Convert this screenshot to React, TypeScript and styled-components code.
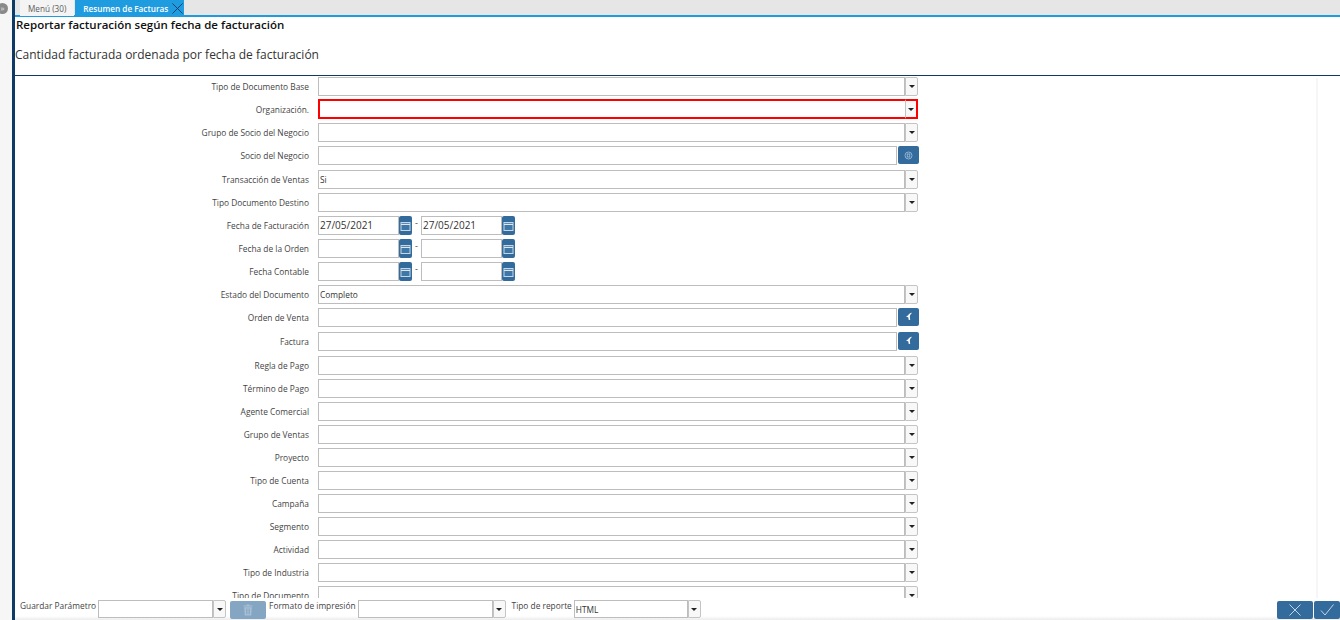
import { createGlobalStyle } from 'styled-components';
import styled from 'styled-components';

const GlobalStyle = createGlobalStyle`
  html, body {
    margin: 0;
    padding: 0;
    height: 100%;
    overflow: hidden;
    background: #ffffff;
    font-family: 'Open Sans', 'Noto Sans', sans-serif;
  }
`;

const Page = styled.div`
  display: flex;
  width: 1340px;
  height: 620px;
  overflow: hidden;
`;

const Sidebar = styled.div`
  position: relative;
  flex: 0 0 12px;
  background: #f6f6f6;
  border-right: 3px solid #0e3a66;
`;

const ExpandButton = styled.div`
  position: absolute;
  left: -3px;
  top: 3px;
  width: 11px;
  height: 11px;
  border-radius: 50%;
  background: #8a8a8a;
  color: #e4e4e4;
  font-size: 8px;
  line-height: 10px;
  text-align: center;
`;

const Main = styled.div`
  flex: 1;
  display: flex;
  flex-direction: column;
  min-width: 0;
`;

const TabBar = styled.div`
  flex: 0 0 15px;
  display: flex;
  align-items: stretch;
  padding-left: 5px;
  gap: 1px;
  background: #e6e6e6;
  border-bottom: 2px solid #1f9ce0;
  box-sizing: content-box;
  height: 15px;
`;

const Tab = styled.div<{ $active?: boolean }>`
  display: flex;
  align-items: center;
  height: 16px;
  padding: ${({ $active }) => ($active ? '0 1px 0 8px' : '0 8px')};
  gap: 4px;
  font-size: 8.2px;
  font-weight: ${({ $active }) => ($active ? 600 : 400)};
  color: ${({ $active }) => ($active ? '#ffffff' : '#5c5c5c')};
  background: ${({ $active }) => ($active ? '#1f9ce0' : '#f4f4f4')};
`;

const Header = styled.div`
  flex: 0 0 59px;
  box-sizing: border-box;
  border-bottom: 1px solid #0e3a66;
`;

const Title = styled.div`
  font-size: 11.5px;
  font-weight: 600;
  line-height: 16px;
  color: #111111;
  margin-left: 1px;
`;

const Subtitle = styled.div`
  font-size: 12px;
  line-height: 18px;
  color: #333333;
  margin-top: 13px;
`;

const FormArea = styled.div`
  position: relative;
  flex: 1;
  min-height: 0;
  overflow: hidden;
  padding-top: 1px;
`;

const ScrollEdge = styled.div`
  position: absolute;
  left: 1301px;
  top: 2px;
  bottom: 0;
  width: 2px;
  background: #f6f6f6;
`;

const Row = styled.div<{ $tall?: boolean }>`
  display: grid;
  grid-template-columns: 294px 1fr;
  column-gap: 9px;
  height: ${({ $tall }) => ($tall ? 24 : 23)}px;
`;

const Label = styled.div`
  font-size: 8.35px;
  line-height: 19px;
  text-align: right;
  color: #444444;
  white-space: nowrap;
`;

const Fields = styled.div`
  display: flex;
  align-items: flex-start;
`;

const Input = styled.div<{ $w: number; $error?: boolean; $big?: boolean; $small?: boolean }>`
  box-sizing: border-box;
  width: ${({ $w }) => $w}px;
  height: ${({ $error, $small }) => ($error ? 20 : $small ? 18 : 19)}px;
  margin-top: ${({ $error }) => ($error ? -1 : 0)}px;
  border: ${({ $error }) => ($error ? '2px solid #ff0000' : '1px solid #bdbdbd')};
  border-right-width: ${({ $error }) => ($error ? '0' : '1px')};
  background: #ffffff;
  padding: ${({ $small }) => ($small ? '1px 0 0 1px' : '0 0 0 1px')};
  font-size: ${({ $big }) => ($big ? 10 : 8.35)}px;
  line-height: ${({ $small }) => ($small ? 16 : 17)}px;
  color: #333333;
  white-space: nowrap;
`;

const ComboButton = styled.div<{ $error?: boolean; $small?: boolean }>`
  box-sizing: border-box;
  display: flex;
  align-items: center;
  justify-content: center;
  width: 13px;
  height: ${({ $error, $small }) => ($error ? 20 : $small ? 18 : 19)}px;
  margin-top: ${({ $error }) => ($error ? -1 : 0)}px;
  border: ${({ $error }) => ($error ? '2px solid #ff0000' : '1px solid #c4c4c4')};
  border-left: 1px solid #c4c4c4;
  border-radius: ${({ $error }) => ($error ? '0' : '0 2px 2px 0')};
  background: #f8f8f8;
`;

const Caret = styled.span`
  width: 0;
  height: 0;
  border-left: 3px solid transparent;
  border-right: 3px solid transparent;
  border-top: 3px solid #222222;
`;

const BlueButton = styled.div<{ $w: number; $h: number; $ml?: number }>`
  display: flex;
  align-items: center;
  justify-content: center;
  width: ${({ $w }) => $w}px;
  height: ${({ $h }) => $h}px;
  margin-left: ${({ $ml }) => $ml ?? 0}px;
  border-radius: 2px;
  background: #336b9c;
  flex: none;
`;

const DateDash = styled.span`
  width: 9px;
  text-align: center;
  font-size: 9px;
  line-height: 14px;
  color: #444444;
`;

const Footer = styled.div`
  flex: 0 0 22px;
  box-sizing: border-box;
  display: flex;
  align-items: flex-start;
  padding: 2px 0 0 5px;
  background: linear-gradient(#ffffff 0, #ffffff 18px, #ececec 22px);
`;

const FooterLabel = styled.span<{ $mr?: number; $ml?: number }>`
  font-size: 8.35px;
  line-height: 15px;
  margin-top: -2px;
  color: #444444;
  white-space: nowrap;
  margin-left: ${({ $ml }) => $ml ?? 0}px;
  margin-right: ${({ $mr }) => $mr ?? 0}px;
`;

const FooterActions = styled.div`
  margin-left: auto;
  display: flex;
  gap: 1px;
  margin-top: 1px;
`;

const TrashButton = styled(BlueButton)`
  background: #85a6c3;
  margin-top: 1px;
  margin-right: 3px;
`;

const Combo = ({
  width,
  value,
  error,
  small,
}: {
  width: number;
  value?: string;
  error?: boolean;
  small?: boolean;
}): JSX.Element => (
  <>
    <Input $w={width} $error={error} $small={small}>
      {value}
    </Input>
    <ComboButton $error={error} $small={small}>
      <Caret />
    </ComboButton>
  </>
);

const CalendarIcon = (): JSX.Element => (
  <svg width="11" height="12" viewBox="0 0 11 12" fill="none">
    <rect x="1" y="2.5" width="9" height="8" fill="#3f77a8" stroke="#c5d7e6" strokeWidth="1" />
    <path d="M1 4.5 H10" stroke="#dbe7f1" strokeWidth="1" />
    <path d="M2 3.5 H9" stroke="#5f8ab0" strokeWidth="1" />
  </svg>
);

const DateField = ({ value }: { value?: string }): JSX.Element => (
  <>
    <Input $w={81} $big>
      {value}
    </Input>
    <BlueButton $w={13} $h={19}>
      <CalendarIcon />
    </BlueButton>
  </>
);

const DateRange = ({ value }: { value?: string }): JSX.Element => (
  <>
    <DateField value={value} />
    <DateDash>-</DateDash>
    <DateField value={value} />
  </>
);

const BackIcon = (): JSX.Element => (
  <svg width="10" height="10" viewBox="0 0 10 10" fill="#ffffff">
    <path d="M8 0.8 C6 1 4.6 2.2 4.1 3.6 L2 4.2 L4.4 5.4 L4.6 7.8 L6.2 8 L5.8 4.6 C6 3.2 6.8 2 8 0.8 Z" />
  </svg>
);

const TargetIcon = (): JSX.Element => (
  <svg width="9" height="9" viewBox="0 0 9 9" fill="none" stroke="#8fb3d2" strokeWidth="1">
    <circle cx="4.5" cy="4.5" r="3.5" />
    <rect x="3.3" y="3" width="2.4" height="3" />
  </svg>
);

const TrashIcon = (): JSX.Element => (
  <svg width="10" height="12" viewBox="0 0 10 12" fill="#a7c0d6">
    <path d="M3.5 0.5 H6.5 V1.5 H9.5 V2.5 H0.5 V1.5 H3.5 Z" />
    <path d="M1.2 3.2 H8.8 L8.2 11.5 H1.8 Z M3 4.5 V10.2 H3.8 V4.5 Z M4.6 4.5 V10.2 H5.4 V4.5 Z M6.2 4.5 V10.2 H7 V4.5 Z" fillRule="evenodd" />
  </svg>
);

const CloseIcon = ({ size, color }: { size: number; color: string }): JSX.Element => (
  <svg width={size} height={size} viewBox="0 0 12 12" stroke={color} strokeWidth="1" fill="none">
    <path d="M0.5 0.5 L11.5 11.5 M11.5 0.5 L0.5 11.5" />
  </svg>
);

const CheckIcon = (): JSX.Element => (
  <svg width="14" height="12" viewBox="0 0 14 12" stroke="#c3d5e5" strokeWidth="1" fill="none">
    <path d="M1 6.5 L5 11 L13.5 0.5" />
  </svg>
);

type Kind = 'combo' | 'error' | 'search' | 'date' | 'lookup';

const rows: { label: string; kind: Kind; value?: string }[] = [
  { label: 'Tipo de Documento Base', kind: 'combo' },
  { label: 'Organización.', kind: 'error' },
  { label: 'Grupo de Socio del Negocio', kind: 'combo' },
  { label: 'Socio del Negocio', kind: 'search' },
  { label: 'Transacción de Ventas', kind: 'combo', value: 'Si' },
  { label: 'Tipo Documento Destino', kind: 'combo' },
  { label: 'Fecha de Facturación', kind: 'date', value: '27/05/2021' },
  { label: 'Fecha de la Orden', kind: 'date' },
  { label: 'Fecha Contable', kind: 'date' },
  { label: 'Estado del Documento', kind: 'combo', value: 'Completo' },
  { label: 'Orden de Venta', kind: 'lookup' },
  { label: 'Factura', kind: 'lookup' },
  { label: 'Regla de Pago', kind: 'combo' },
  { label: 'Término de Pago', kind: 'combo' },
  { label: 'Agente Comercial', kind: 'combo' },
  { label: 'Grupo de Ventas', kind: 'combo' },
  { label: 'Proyecto', kind: 'combo' },
  { label: 'Tipo de Cuenta', kind: 'combo' },
  { label: 'Campaña', kind: 'combo' },
  { label: 'Segmento', kind: 'combo' },
  { label: 'Actividad', kind: 'combo' },
  { label: 'Tipo de Industria', kind: 'combo' },
  { label: 'Tipo de Documento', kind: 'combo' },
];

const App = (): JSX.Element => (
  <>
    <GlobalStyle />
    <Page>
      <Sidebar>
        <ExpandButton>»</ExpandButton>
      </Sidebar>
      <Main>
        <TabBar>
          <Tab>Menú (30)</Tab>
          <Tab $active>
            Resumen de Facturas
            <CloseIcon size={11} color="#0e3a66" />
          </Tab>
        </TabBar>
        <Header>
          <Title>Reportar facturación según fecha de facturación</Title>
          <Subtitle>Cantidad facturada ordenada por fecha de facturación</Subtitle>
        </Header>
        <FormArea>
          <ScrollEdge />
          {rows.map((row) => (
            <Row key={row.label} $tall={row.kind === 'search' || row.kind === 'lookup'}>
              <Label>{row.label}</Label>
              <Fields>
                {row.kind === 'combo' && <Combo width={587} value={row.value} />}
                {row.kind === 'error' && <Combo width={587} error />}
                {row.kind === 'date' && <DateRange value={row.value} />}
                {(row.kind === 'search' || row.kind === 'lookup') && (
                  <>
                    <Input $w={579} />
                    <BlueButton $w={21} $h={18} $ml={1}>
                      {row.kind === 'search' ? <TargetIcon /> : <BackIcon />}
                    </BlueButton>
                  </>
                )}
              </Fields>
            </Row>
          ))}
        </FormArea>
        <Footer>
          <FooterLabel $mr={2}>Guardar Parámetro</FooterLabel>
          <Combo width={115} small />
          <TrashButton $w={36} $h={18} $ml={4}>
            <TrashIcon />
          </TrashButton>
          <FooterLabel $mr={2}>Formato de impresión</FooterLabel>
          <Combo width={135} small />
          <FooterLabel $ml={6} $mr={2}>
            Tipo de reporte
          </FooterLabel>
          <Combo width={114} value="HTML" small />
          <FooterActions>
            <BlueButton $w={36} $h={18}>
              <CloseIcon size={12} color="#c3d5e5" />
            </BlueButton>
            <BlueButton $w={26} $h={18}>
              <CheckIcon />
            </BlueButton>
          </FooterActions>
        </Footer>
      </Main>
    </Page>
  </>
);

export default App;
